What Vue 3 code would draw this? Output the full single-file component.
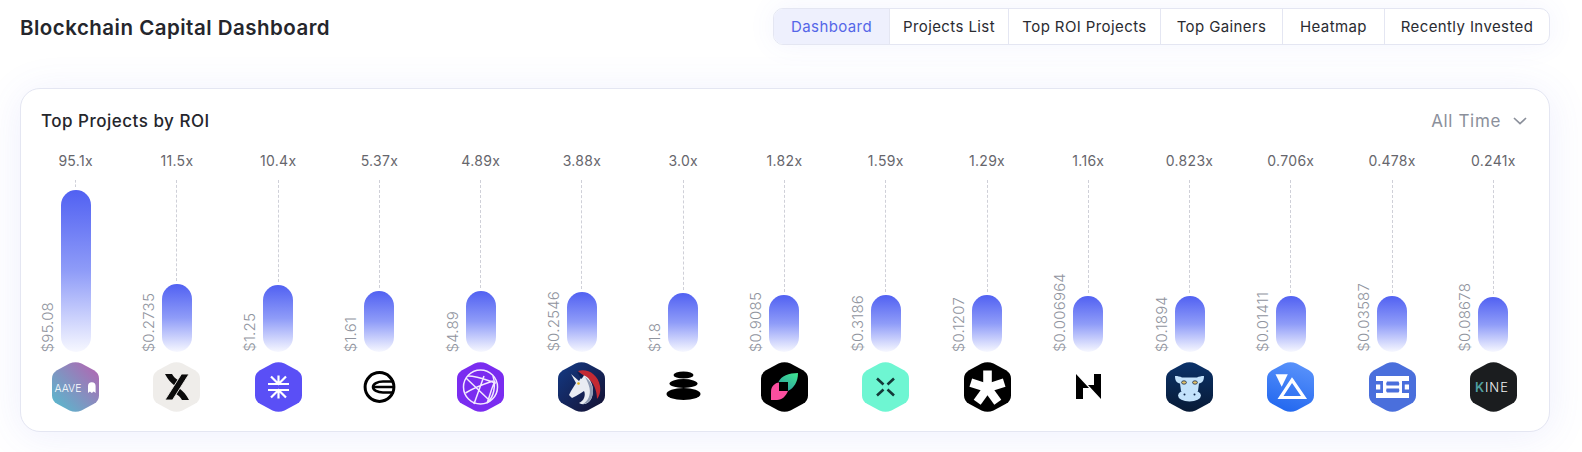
<script setup>
const tabs = [
  { label: 'Dashboard', width: 115 },
  { label: 'Projects List', width: 119 },
  { label: 'Top ROI Projects', width: 152 },
  { label: 'Top Gainers', width: 122 },
  { label: 'Heatmap', width: 102 },
  { label: 'Recently Invested', width: 165 },
]

const projects = [
  { key: 'aave', roi: '95.1x', price: '$95.08', height: 162 },
  { key: 'dydx', roi: '11.5x', price: '$0.2735', height: 68 },
  { key: 'stx', roi: '10.4x', price: '$1.25', height: 67 },
  { key: 'wld', roi: '5.37x', price: '$1.61', height: 61 },
  { key: 'globe', roi: '4.89x', price: '$4.89', height: 61 },
  { key: 'inch', roi: '3.88x', price: '$0.2546', height: 60 },
  { key: 'bal', roi: '3.0x', price: '$1.8', height: 59 },
  { key: 'leaf', roi: '1.82x', price: '$0.9085', height: 57 },
  { key: 'cross', roi: '1.59x', price: '$0.3186', height: 57 },
  { key: 'star', roi: '1.29x', price: '$0.1207', height: 57 },
  { key: 'n', roi: '1.16x', price: '$0.006964', height: 56 },
  { key: 'cow', roi: '0.823x', price: '$0.1894', height: 56 },
  { key: 'tri', roi: '0.706x', price: '$0.01411', height: 56 },
  { key: 'ena', roi: '0.478x', price: '$0.03587', height: 56 },
  { key: 'kine', roi: '0.241x', price: '$0.08678', height: 55 },
]

const hex = 'M17.5 1.6Q23.5-1 29.5 1.6L42 8.2Q47 11.2 47 16.5V33.5Q47 38.8 42 41.8L29.5 48.4Q23.5 51 17.5 48.4L5 41.8Q0 38.8 0 33.5V16.5Q0 11.2 5 8.2Z'
</script>

<template>
  <div class="page">
    <header class="topbar">
      <h1 class="page-title">Blockchain Capital Dashboard</h1>
      <nav class="tabs">
        <a
          v-for="(t, i) in tabs"
          :key="t.label"
          class="tab"
          :class="{ active: i === 0 }"
          :style="{ width: t.width + 'px' }"
        >{{ t.label }}</a>
      </nav>
    </header>

    <section class="card">
      <div class="card-head">
        <h2 class="card-title">Top Projects by ROI</h2>
        <div class="range">
          <span>All Time</span>
          <svg width="14" height="8" viewBox="0 0 14 8" fill="none" stroke="#8b909b" stroke-width="1.7">
            <path d="M1 1l6 5.6L13 1" />
          </svg>
        </div>
      </div>

      <div class="chart">
        <div v-for="p in projects" :key="p.key" class="col">
          <div class="roi">{{ p.roi }}</div>
          <div class="stem"></div>
          <div class="bar" :style="{ height: p.height + 'px' }">
            <span class="price">{{ p.price }}</span>
          </div>
          <svg class="logo" width="47" height="50" viewBox="0 0 47 50">
            <defs>
              <linearGradient id="g-aave" x1="0" y1="1" x2="1" y2="0">
                <stop offset="0.1" stop-color="#5cb5cc" />
                <stop offset="0.85" stop-color="#a86fb5" />
              </linearGradient>
              <linearGradient id="g-inch" x1="0" y1="0" x2="1" y2="1">
                <stop offset="0" stop-color="#133a86" />
                <stop offset="1" stop-color="#151030" />
              </linearGradient>
              <linearGradient id="g-cow" x1="0" y1="0" x2="0" y2="1">
                <stop offset="0" stop-color="#0b3269" />
                <stop offset="1" stop-color="#071a36" />
              </linearGradient>
              <linearGradient id="g-tri" x1="0.7" y1="0" x2="0.4" y2="1">
                <stop offset="0" stop-color="#5a93fb" />
                <stop offset="1" stop-color="#2368ef" />
              </linearGradient>
              <linearGradient id="g-leaf" x1="1" y1="0" x2="0.4" y2="1">
                <stop offset="0" stop-color="#3fe88f" />
                <stop offset="1" stop-color="#2fa2a0" />
              </linearGradient>
            </defs>

            <template v-if="p.key === 'aave'">
              <path :d="hex" fill="url(#g-aave)" />
              <text x="2.5" y="29.5" class="logo-aave">AAVE</text>
              <path d="M36 31V24a3.8 3.8 0 0 1 7.6 0V31l-1.9-1.4-1.9 1.4-1.9-1.4Z" fill="#fff" />
            </template>

            <template v-else-if="p.key === 'dydx'">
              <path :d="hex" fill="#efedea" />
              <path d="M12 12H19C20.5 15 23 17 25 18L21.5 23.5C18 21 14.5 17 12 12Z" fill="#0b0b0b" />
              <path d="M36 38H29C27.5 35 25 33 23 32L26.5 26.5C30 29 33.5 33 36 38Z" fill="#0b0b0b" />
              <path d="M36 12H28.5L12 38H19.5Z" fill="#0b0b0b" stroke="#efedea" stroke-width=".9" />
            </template>

            <template v-else-if="p.key === 'stx'">
              <path :d="hex" fill="#5a4ff6" />
              <path d="M13 22H34M13 28H34M23.5 13.5V22M23.5 28V36.5M16 14.5L23.5 22L31 14.5M16 35.5L23.5 28L31 35.5" fill="none" stroke="#fff" stroke-width="2.2" />
            </template>

            <template v-else-if="p.key === 'wld'">
              <circle cx="23.5" cy="25" r="14.4" fill="none" stroke="#000" stroke-width="3" />
              <path d="M38 19.5H27A10 5.5 0 0 0 27 30.5H38M17.5 25H38" fill="none" stroke="#000" stroke-width="2.6" />
            </template>

            <template v-else-if="p.key === 'globe'">
              <path :d="hex" fill="#7a2cf0" />
              <g fill="none" stroke="#f3e9ff" stroke-width="1.5">
                <circle cx="23.5" cy="25" r="17" />
                <path d="M9 16L31 37M11 14C22 14 34 20 39 21M17 42L27 14M38 19C34 27 33 34 30 41M36 14C39 24 37 35 30 41M8.5 31C18 25 27 22 36 19" />
              </g>
            </template>

            <template v-else-if="p.key === 'inch'">
              <path :d="hex" fill="url(#g-inch)" />
              <path d="M20 9C29 6 40 12 42 24C43 30 41 35 39 37C39 29 36 20 29 16C26 14 23 12 20 9Z" fill="#c42a33" />
              <path d="M13 12L21 19L25 13C33 15 37 26 34 35C32 41 26 44 21 41C26 39 28 33 26 29L23 31L18 34L14 36L11 33L13 29L18 21Z" fill="#e9ecf2" />
              <path d="M27 15C33 19 37 27 34 35C32 40 28 42 25 42C30 39 33 33 31.5 26C30.5 22 29 18 27 15Z" fill="#8f9bb3" />
              <path d="M19 9.5L26 13.5L23.5 17Z" fill="#0d1c4c" />
              <circle cx="20.5" cy="21.5" r="1.3" fill="#e4b21c" />
            </template>

            <template v-else-if="p.key === 'bal'">
              <ellipse cx="23.5" cy="13" rx="10" ry="3.6" fill="#000" />
              <ellipse cx="23.5" cy="21.5" rx="14" ry="4.4" fill="#000" />
              <ellipse cx="23.5" cy="32" rx="17" ry="6" fill="#000" />
            </template>

            <template v-else-if="p.key === 'leaf'">
              <path :d="hex" fill="#000" />
              <path d="M17.5 20C20 14 28 11 37 11C37 20 33 26 27 29V20Z" fill="url(#g-leaf)" />
              <path d="M18 20.5C14 21 10 24 10 30V38H16C21 38 25 34 27 29H18Z" fill="#fb4f9f" />
            </template>

            <template v-else-if="p.key === 'cross'">
              <path :d="hex" fill="#6ef6d2" />
              <path d="M15 16.5L21.5 22.5M32 16.5L25.5 22.5M15 33.5L21.5 27.5M32 33.5L25.5 27.5" stroke="#143a38" stroke-width="2.6" fill="none" />
            </template>

            <template v-else-if="p.key === 'star'">
              <path :d="hex" fill="#000" />
              <g stroke="#fff" stroke-width="8.6">
                <path d="M23.5 26V8.5" />
                <path d="M23.5 26L40.2 20.6" />
                <path d="M23.5 26L33.8 40.2" />
                <path d="M23.5 26L13.2 40.2" />
                <path d="M23.5 26L6.8 20.6" />
              </g>
            </template>

            <template v-else-if="p.key === 'n'">
              <path d="M11 12L24 26H18V37H11Z" fill="#000" />
              <path d="M36 37L23 23H29V12H36Z" fill="#000" />
            </template>

            <template v-else-if="p.key === 'cow'">
              <path :d="hex" fill="url(#g-cow)" />
              <path d="M9 14C12 14 14 14.5 16 15.5H31C33 14.5 35 14 38 14C38 19 36 21 33 21.5L32 29H15L14 21.5C11 21 9 19 9 14Z" fill="#c3e2fb" />
              <ellipse cx="23.5" cy="33.5" rx="11.5" ry="6" fill="#c3e2fb" />
              <ellipse cx="18" cy="20.5" rx="2.4" ry="1.7" fill="#e2c26a" stroke="#13294c" stroke-width=".8" />
              <ellipse cx="29" cy="20.5" rx="2.4" ry="1.7" fill="#e2c26a" stroke="#13294c" stroke-width=".8" />
              <circle cx="18.5" cy="32.5" r="1" fill="#13294c" />
              <circle cx="28.5" cy="32.5" r="1" fill="#13294c" />
            </template>

            <template v-else-if="p.key === 'tri'">
              <path :d="hex" fill="url(#g-tri)" />
              <path d="M8.5 12.3H20.8L14.7 24.8Z" fill="#fff" />
              <path d="M25 18L37 35.5H13.5Z" fill="none" stroke="#fff" stroke-width="3.2" />
            </template>

            <template v-else-if="p.key === 'ena'">
              <path :d="hex" fill="#4a6fdc" />
              <path d="M7 14H40V19H33V31H40V36H7V31H14V19H7Z" fill="#fff" />
              <path d="M18 19.5H29.5A4 4 0 0 1 30 23.5H17.5A4 4 0 0 1 18 19.5ZM17.5 26.5H30A4 4 0 0 1 29.5 30.5H18A4 4 0 0 1 17.5 26.5Z" fill="#4a6fdc" />
              <path d="M7 22.5H11.5V27.5H7ZM35.5 22.5H40V27.5H35.5Z" fill="#fff" />
              <path d="M11.5 19H14V31H11.5ZM33 19H35.5V31H33Z" fill="#4a6fdc" />
            </template>

            <template v-else>
              <path :d="hex" fill="#1b1d1f" />
              <text x="5" y="30" class="logo-kine"><tspan fill="#4f9fa0" font-weight="600">K</tspan><tspan fill="#eef1f1">INE</tspan></text>
            </template>
          </svg>
        </div>
      </div>
    </section>
  </div>
</template>

<style scoped>
.page {
  width: 1582px;
  height: 452px;
  box-sizing: border-box;
  padding: 8px 32px 0 20px;
  font-family: Inter, "Open Sans", sans-serif;
  color: #23242b;
  background: #fff;
  overflow: hidden;
}

.topbar {
  display: flex;
  justify-content: space-between;
  align-items: flex-start;
  height: 80px;
}

.page-title {
  margin: 8px 0 0;
  font-size: 20.5px;
  line-height: 24px;
  font-weight: 600;
  letter-spacing: 0.48px;
  color: #25262c;
}

.tabs {
  display: flex;
  height: 37px;
  box-sizing: border-box;
  background: #fff;
  border: 1px solid #e4e6f2;
  border-radius: 10px;
  overflow: hidden;
  box-shadow: 0 0 28px rgba(85, 100, 240, 0.07);
}

.tab {
  display: flex;
  align-items: center;
  justify-content: center;
  box-sizing: border-box;
  font-size: 15px;
  letter-spacing: 0.4px;
  white-space: nowrap;
  color: #2a2b31;
  border-left: 1px solid #e4e6f2;
}

.tab:first-child {
  border-left: 0;
}

.tab.active {
  background: #eef0fd;
  color: #5566e8;
}

.card {
  height: 344px;
  box-sizing: border-box;
  background: #fff;
  border: 1px solid #e4e6f2;
  border-radius: 20px;
  box-shadow: 0 4px 40px rgba(85, 100, 240, 0.1);
}

.card-head {
  display: flex;
  justify-content: space-between;
  align-items: center;
  height: 50px;
  padding: 13px 22px 0 20px;
  box-sizing: border-box;
}

.card-title {
  margin: 0;
  font-size: 17px;
  font-weight: 450;
  letter-spacing: 0.5px;
  color: #25262c;
}

.range {
  display: flex;
  align-items: center;
  gap: 12px;
  font-size: 17px;
  letter-spacing: 0.65px;
  color: #8b909b;
}

.chart {
  display: flex;
  padding: 0 5px 0 4px;
}

.col {
  flex: 1;
  min-width: 0;
  height: 293px;
  display: flex;
  flex-direction: column;
  align-items: center;
}

.roi {
  height: 41px;
  padding-top: 12px;
  box-sizing: border-box;
  font-size: 14px;
  line-height: 20px;
  letter-spacing: 0.3px;
  color: #66666c;
}

.stem {
  flex: 1;
  width: 0;
  margin-bottom: 3px;
  border-left: 1px dashed #cfd0d8;
}

.bar {
  position: relative;
  width: 30px;
  flex: none;
  border-radius: 15px;
  background: linear-gradient(180deg, #5161f2 0%, #8f9cf8 50%, #f7f8ff 100%);
}

.price {
  position: absolute;
  right: 100%;
  bottom: 0;
  margin-right: 5px;
  writing-mode: vertical-rl;
  transform: rotate(180deg);
  font-size: 15px;
  font-weight: 300;
  line-height: 16px;
  letter-spacing: 0.2px;
  white-space: nowrap;
  color: #90949e;
}

.logo {
  flex: none;
  margin-top: 10px;
  margin-bottom: 20px;
}

.logo-aave {
  font-family: Inter, sans-serif;
  font-size: 10.5px;
  font-weight: 300;
  fill: #fff;
}

.logo-kine {
  font-family: Inter, sans-serif;
  font-size: 13px;
  font-weight: 300;
  letter-spacing: 0.9px;
}
</style>

<style>
body {
  background: #fff;
}
</style>
